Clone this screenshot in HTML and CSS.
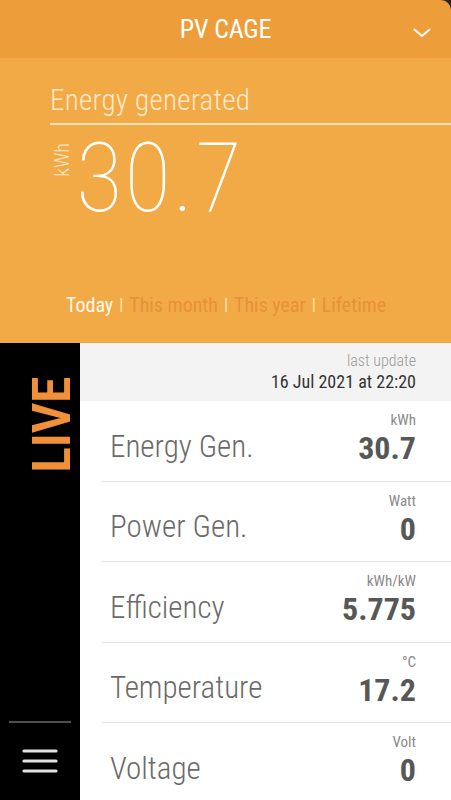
FILE: index.html
```html
<!DOCTYPE html>
<html lang="en">
<head>
<meta charset="utf-8">
<title>PV CAGE</title>
<link rel="stylesheet" href="styles.css">
</head>
<body>
<div class="app">
  <header class="topbar">
    <span></span>
    <h1 class="title">PV CAGE</h1>
    <svg class="chevron" width="18" height="10" viewBox="0 0 18 10"><polyline points="1.5,1.5 9,8 16.5,1.5" fill="none" stroke="#fff" stroke-width="2" stroke-linecap="round" stroke-linejoin="round"/></svg>
  </header>

  <section class="hero">
    <h2 class="hero-title">Energy generated</h2>
    <div class="hero-value">
      <span class="hero-unit">kWh</span>
      <span class="hero-number">30.7</span>
    </div>
    <nav class="tabs">
      <span class="tab active">Today</span>
      <span class="sep">|</span>
      <span class="tab">This month</span>
      <span class="sep">|</span>
      <span class="tab">This year</span>
      <span class="sep">|</span>
      <span class="tab">Lifetime</span>
    </nav>
  </section>

  <section class="live">
    <aside class="sidebar">
      <div class="live-label">LIVE</div>
      <div class="side-sep"></div>
      <div class="menu">
        <svg width="36" height="26" viewBox="0 0 36 26"><g stroke="#e2e2e2" stroke-width="3.2" stroke-linecap="round"><line x1="2" y1="3" x2="34" y2="3"/><line x1="2" y1="13" x2="34" y2="13"/><line x1="2" y1="23" x2="34" y2="23"/></g></svg>
      </div>
    </aside>
    <div class="content">
      <div class="update">
        <div class="update-label">last update</div>
        <div class="update-date">16 Jul 2021 at 22:20</div>
      </div>
      <div class="row">
        <div class="row-label">Energy Gen.</div>
        <div class="row-data"><div class="unit">kWh</div><div class="value">30.7</div></div>
      </div>
      <div class="row">
        <div class="row-label">Power Gen.</div>
        <div class="row-data"><div class="unit">Watt</div><div class="value">0</div></div>
      </div>
      <div class="row">
        <div class="row-label">Efficiency</div>
        <div class="row-data"><div class="unit">kWh/kW</div><div class="value">5.775</div></div>
      </div>
      <div class="row">
        <div class="row-label">Temperature</div>
        <div class="row-data"><div class="unit">°C</div><div class="value">17.2</div></div>
      </div>
      <div class="row">
        <div class="row-label">Voltage</div>
        <div class="row-data"><div class="unit">Volt</div><div class="value">0</div></div>
      </div>
    </div>
  </section>
</div>
</body>
</html>
```
FILE: styles.css
```css
* { box-sizing: border-box; }
html, body { margin: 0; padding: 0; }
body {
  background: #2b2218;
  font-family: "Roboto Condensed", "Roboto", sans-serif;
  width: 451px;
  height: 800px;
  overflow: hidden;
}
.app {
  display: flex;
  flex-direction: column;
  height: 800px;
}

/* top bar */
.topbar {
  flex: none;
  height: 58px;
  background: #ee9d3b;
  border-top-right-radius: 10px;
  display: grid;
  grid-template-columns: 1fr auto 1fr;
  align-items: center;
}
.title {
  margin: 0;
  color: #fff;
  font-weight: 400;
  font-size: 26px;
  line-height: 30px;
  letter-spacing: -0.2px;
}
.chevron {
  justify-self: end;
  margin-right: 20px;
  margin-top: 8px;
}

/* hero */
.hero {
  flex: none;
  height: 285px;
  background: #f2aa46;
  display: flex;
  flex-direction: column;
  padding-top: 25px;
}
.hero-title {
  margin: 0 0 0 50px;
  color: #fde9cc;
  font-weight: 300;
  font-size: 29px;
  line-height: 34px;
  letter-spacing: 0.3px;
  padding-bottom: 6px;
  border-bottom: 2px solid #fbe2bd;
}
.hero-value {
  display: flex;
  align-items: flex-start;
  margin-left: 52px;
  margin-top: 5px;
}
.hero-unit {
  writing-mode: vertical-rl;
  transform: rotate(180deg);
  color: #fde6c6;
  font-weight: 300;
  font-size: 20px;
  line-height: 20px;
  margin-top: 13px;
  margin-right: 4px;
}
.hero-number {
  color: #fff;
  font-weight: 100;
  font-size: 96px;
  line-height: 96px;
  letter-spacing: 2px;
}
.tabs {
  margin-top: auto;
  margin-left: 66px;
  padding-bottom: 26px;
  display: flex;
  gap: 6px;
  font-size: 20px;
  line-height: 24px;
}
.tab { color: #e9903c; }
.tab.active { color: #fff8ec; }
.sep { color: #fde8a8; font-weight: 700; font-size: 16px; }

/* live section */
.live {
  flex: 1;
  display: flex;
  min-height: 0;
}
.sidebar {
  width: 80px;
  flex: none;
  background: #000;
  display: flex;
  flex-direction: column;
}
.live-label {
  writing-mode: vertical-rl;
  transform: rotate(180deg);
  align-self: flex-start;
  color: #f0913a;
  font-weight: 600;
  font-size: 54px;
  line-height: 54px;
  margin-top: 34px;
  margin-left: 25px;
  letter-spacing: -0.5px;
}
.side-sep {
  margin-top: auto;
  height: 2px;
  margin-left: 9px;
  margin-right: 9px;
  background: #4d4d4d;
}
.menu {
  flex: none;
  height: 77px;
  padding-top: 25px;
  padding-left: 22px;
}
.menu svg { display: block; }

.content {
  flex: 1;
  background: #fff;
  display: flex;
  flex-direction: column;
}
.update {
  flex: none;
  height: 58px;
  background: #f3f3f3;
  text-align: right;
  padding-right: 35px;
  padding-top: 8px;
}
.update-label {
  color: #9a9a9a;
  font-weight: 300;
  font-size: 16px;
  line-height: 20px;
}
.update-date {
  color: #333;
  font-weight: 400;
  font-size: 18px;
  line-height: 22px;
}
.row {
  flex: none;
  height: 80.5px;
  margin-left: 22px;
  padding-left: 8px;
  padding-right: 35px;
  border-bottom: 1px solid #e6e6e6;
  display: flex;
  justify-content: space-between;
}
.row-label {
  align-self: center;
  margin-top: 12px;
  color: #6a6a6a;
  font-weight: 300;
  font-size: 31px;
  line-height: 36px;
}
.row-data {
  text-align: right;
  padding-top: 11px;
}
.unit {
  color: #8a8a8a;
  font-size: 15px;
  line-height: 17px;
}
.value {
  color: #575757;
  font-weight: 700;
  font-size: 32px;
  line-height: 38px;
}
```
